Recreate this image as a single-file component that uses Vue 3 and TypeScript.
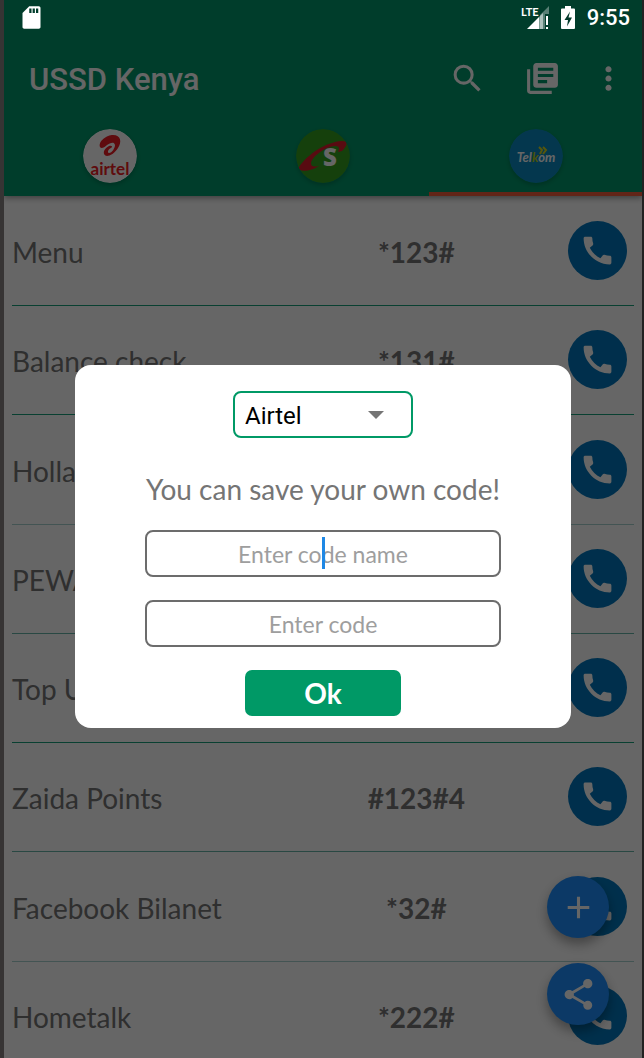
<script setup lang="ts">
import { ref } from 'vue'

interface UssdCode {
  name: string
  code: string
}

const codes: UssdCode[] = [
  { name: 'Menu', code: '*123#' },
  { name: 'Balance check', code: '*131#' },
  { name: 'Holla', code: '' },
  { name: 'PEWA', code: '' },
  { name: 'Top Up', code: '' },
  { name: 'Zaida Points', code: '#123#4' },
  { name: 'Facebook Bilanet', code: '*32#' },
  { name: 'Hometalk', code: '*222#' },
]

const network = ref('Airtel')
const codeName = ref('')
const codeValue = ref('')
</script>

<template>
  <div class="app">
    <div class="status">
      <svg class="sd" viewBox="0 0 24 24" aria-hidden="true">
        <path d="M18.500 2H10L4 8v12.500c0 .8.700 1.500 1.500 1.500h13c.8 0 1.500-.7 1.500-1.500v-17c0-.8-.7-1.500-1.500-1.500zM12 8h-2V4h2v4zm3 0h-2V4h2v4zm3 0h-2V4h2v4z" fill="#fff" />
      </svg>
      <svg class="signal" viewBox="0 0 30 26" aria-hidden="true">
        <text x="0" y="11" class="lte">LTE</text>
        <path d="M28 1v8h-4v15h-5V10z" fill="#fff" opacity=".35" />
        <path d="M6 24L18 12v12z" fill="#fff" />
        <path d="M18 12l4-4v16h-4z" fill="#fff" opacity=".5" />
        <path d="M25 11h2v9h-2zM25 22h2v2h-2z" fill="#fff" />
      </svg>
      <svg class="battery" viewBox="0 0 14 24" aria-hidden="true">
        <path d="M4 0h6v2.500h3a1 1 0 0 1 1 1V22a1 1 0 0 1-1 1H1a1 1 0 0 1-1-1V3.500a1 1 0 0 1 1-1h3z" fill="#fff" />
        <path d="M9 5.500L3.500 14H7l-1 6.500L11 11.500H7.500z" fill="#033a2b" />
      </svg>
      <span>9:55</span>
    </div>

    <header class="header">
      <div class="toolbar">
        <h1>USSD Kenya</h1>
        <button class="tool" aria-label="Search">
          <svg viewBox="0 0 24 24"><path d="M15.500 14h-.79l-.28-.27A6.471 6.471 0 0 0 16 9.500 6.500 6.500 0 1 0 9.500 16c1.610 0 3.090-.59 4.230-1.570l.27.28v.79l5 4.990L20.490 19l-4.990-5zm-6 0C7.010 14 5 11.990 5 9.500S7.010 5 9.500 5 14 7.010 14 9.500 11.990 14 9.500 14z" /></svg>
        </button>
        <button class="tool" aria-label="Saved codes">
          <svg viewBox="0 0 24 24"><path d="M4 6H2v14c0 1.100.9 2 2 2h14v-2H4V6zm16-4H8c-1.100 0-2 .9-2 2v12c0 1.100.9 2 2 2h12c1.100 0 2-.9 2-2V4c0-1.100-.9-2-2-2zm-1 9H9V9h10v2zm-4 4H9v-2h6v2zm4-8H9V5h10v2z" /></svg>
        </button>
        <button class="tool more" aria-label="More options">
          <svg viewBox="0 0 24 24"><path d="M12 8c1.100 0 2-.9 2-2s-.9-2-2-2-2 .9-2 2 .9 2 2 2zm0 2c-1.100 0-2 .9-2 2s.9 2 2 2 2-.9 2-2-.9-2-2-2zm0 6c-1.100 0-2 .9-2 2s.9 2 2 2 2-.9 2-2-.9-2-2-2z" /></svg>
        </button>
      </div>
      <nav class="tabs">
        <button class="tab" aria-label="Airtel">
          <svg class="logo" viewBox="0 0 54 54">
            <circle cx="27" cy="27" r="27" fill="#fff" />
            <path d="M17 18C15 12 24 6 30 6c8 0 9 7 5 13-3 5-8 8-11 8-5-1-4-7 2-10 3-1 4 1 2 2-3 1-4 5-2 5 3 0 6-5 6-8-1-4-5-2-8 0-3 3-6 4-7 2z" fill="#ed1c24" />
            <text x="27" y="46" class="airtel">airtel</text>
          </svg>
        </button>
        <button class="tab" aria-label="Safaricom">
          <svg class="logo" viewBox="0 0 54 54">
            <circle cx="27" cy="27" r="27" fill="#35a020" />
            <path d="M3 38C12 25 30 13 46 12c7 0 5 5 0 10l-4 1c2-4 1-6-3-6C28 18 16 28 15 34c0 4 3 4 8 3-6 4-15 6-19 4-2-1-2-2-1-3z" fill="#dd1c2b" />
            <text x="34" y="37" class="s">S</text>
          </svg>
        </button>
        <button class="tab active" aria-label="Telkom">
          <svg class="logo" viewBox="0 0 54 54">
            <circle cx="27" cy="27" r="27" fill="#0a8bc4" />
            <text x="27" y="33" class="telkom">Tel<tspan fill="#b5cc18">k</tspan>om</text>
            <path d="M30 18l3 3-2 4M34 18l3 3-3 4" fill="none" stroke="#d8d820" stroke-width="2" />
          </svg>
        </button>
      </nav>
    </header>

    <main class="list">
      <div v-for="item in codes" :key="item.name" class="row">
        <span class="name">{{ item.name }}</span>
        <span class="code">{{ item.code }}</span>
        <button class="call" :aria-label="`Call ${item.name}`">
          <svg viewBox="0 0 24 24"><path d="M20.010 15.380c-1.230 0-2.420-.2-3.530-.56a.977.977 0 0 0-1.010.24l-1.570 1.970c-2.830-1.350-5.480-3.900-6.890-6.830l1.950-1.660c.27-.28.35-.67.24-1.020-.37-1.110-.56-2.300-.56-3.530 0-.54-.45-.99-.99-.99H4.190C3.650 3 3 3.240 3 3.990 3 13.280 10.730 21 20.010 21c.71 0 .99-.63.99-1.180v-3.450c0-.54-.45-.99-.99-.99z" /></svg>
        </button>
      </div>
    </main>

    <div class="fabs">
      <button class="fab" aria-label="Add code">
        <svg viewBox="0 0 24 24"><path d="M19 13h-6v6h-2v-6H5v-2h6V5h2v6h6v2z" /></svg>
      </button>
      <button class="fab" aria-label="Share">
        <svg viewBox="0 0 24 24"><path d="M18 16.080c-.76 0-1.440.3-1.960.77L8.910 12.700c.05-.23.09-.46.09-.7s-.04-.47-.09-.7l7.050-4.110c.54.5 1.250.81 2.040.81 1.660 0 3-1.340 3-3s-1.340-3-3-3-3 1.340-3 3c0 .24.040.47.090.7L8.040 9.810C7.500 9.310 6.790 9 6 9c-1.660 0-3 1.340-3 3s1.340 3 3 3c.79 0 1.500-.31 2.040-.81l7.120 4.160c-.05.21-.08.43-.08.65 0 1.610 1.310 2.920 2.920 2.920s2.920-1.310 2.920-2.920-1.310-2.920-2.920-2.920z" /></svg>
      </button>
    </div>

    <div class="scrim">
      <form class="dialog" role="dialog" aria-label="Save your own code" @submit.prevent>
        <div class="picker">
          <select v-model="network" aria-label="Network">
            <option>Airtel</option>
            <option>Safaricom</option>
            <option>Telkom</option>
          </select>
          <svg class="arrow" viewBox="0 0 16 8" aria-hidden="true"><path d="M0 0h16L8 8z" fill="#757575" /></svg>
        </div>
        <p>You can save your own code!</p>
        <div class="field">
          <input v-model="codeName" type="text" placeholder="Enter code name" aria-label="Code name" />
          <span v-if="!codeName" class="caret"></span>
        </div>
        <div class="field">
          <input v-model="codeValue" type="text" placeholder="Enter code" aria-label="Code" />
        </div>
        <button class="ok" type="submit">Ok</button>
      </form>
    </div>
  </div>
</template>

<style>
body {
  margin: 0;
  background: #666;
}
</style>

<style scoped>
* {
  box-sizing: border-box;
}

button {
  border: 0;
  padding: 0;
  background: none;
  font: inherit;
  cursor: pointer;
}

.app {
  position: relative;
  display: flex;
  flex-direction: column;
  height: 100vh;
  overflow: hidden;
  border-left: 4px solid #363434;
  border-right: 2px solid #222;
  background: #fff;
  font-family: Lato, "Open Sans", sans-serif;
}

.status {
  position: absolute;
  z-index: 3;
  top: 0;
  left: 0;
  right: 0;
  display: flex;
  align-items: center;
  height: 35px;
  padding: 0 12px 0 14px;
  color: #fff;
  font: 500 22px/35px Roboto, sans-serif;
}

.sd {
  width: 27px;
  height: 27px;
  margin-right: auto;
}

.signal {
  width: 30px;
  height: 26px;
  margin-right: 10px;
}

.lte {
  font: 700 11px Lato, sans-serif;
  fill: #fff;
}

.battery {
  width: 14px;
  height: 24px;
  margin-right: 12px;
}

.header {
  position: relative;
  z-index: 1;
  flex: none;
  padding-top: 35px;
  background: #00996b;
  box-shadow: 0 2px 6px rgba(0, 0, 0, 0.4);
}

.toolbar {
  display: flex;
  align-items: center;
  height: 86px;
  padding: 0 6px 0 25px;
}

h1 {
  flex: 1;
  margin: 0;
  padding-top: 4px;
  color: #fff;
  font: 500 31px/40px Roboto, sans-serif;
}

.tool {
  display: grid;
  place-items: center;
  width: 75px;
  height: 56px;
}

.more {
  width: 56px;
}

.tool svg,
.call svg,
.fab svg {
  width: 37px;
  height: 37px;
  fill: #fff;
}

.tabs {
  display: flex;
}

.tab {
  display: flex;
  flex: 1;
  justify-content: center;
  height: 75px;
  padding-top: 8px;
  border-bottom: 4px solid transparent;
}

.tab.active {
  border-bottom-color: #f45c3c;
}

.logo {
  width: 54px;
  height: 54px;
  border-radius: 50%;
  box-shadow: 0 2px 4px rgba(0, 0, 0, 0.2);
}

.airtel {
  font: 700 17px Lato, sans-serif;
  fill: #ed1c24;
  text-anchor: middle;
}

.s {
  font: 800 24px "Open Sans", sans-serif;
  fill: #fff;
  text-anchor: middle;
}

.telkom {
  font: italic 700 13px Lato, sans-serif;
  fill: #fff;
  text-anchor: middle;
}

.list {
  flex: 1;
  min-height: 0;
  padding: 1px 8px 0;
  overflow: hidden;
}

.row {
  display: grid;
  grid-template-columns: 5fr 6fr 59px;
  align-items: center;
  height: 109px;
  padding: 0 7px 1px 0;
  border-bottom: 1px solid #17a17a;
  color: #757575;
  font-size: 28px;
  line-height: 34px;
}

.row:nth-child(4n + 3) {
  height: 110px;
  border-bottom-color: #a9d2d0;
}

.row:nth-child(4),
.row:nth-child(6) {
  border-bottom-color: #68b5a8;
}

.name,
.code {
  padding-top: 3px;
}

.name {
  white-space: nowrap;
}

.code {
  font-weight: 700;
  text-align: center;
}

.call {
  display: grid;
  place-items: center;
  width: 59px;
  height: 59px;
  border-radius: 50%;
  background: #0277bd;
}

.fabs {
  position: absolute;
  z-index: 1;
  right: 33px;
  bottom: 33px;
  display: grid;
  gap: 25px;
}

.fab {
  display: grid;
  place-items: center;
  width: 62px;
  height: 62px;
  border-radius: 50%;
  background: #1e90ff;
  box-shadow: 0 6px 12px rgba(0, 0, 0, 0.35);
}

.scrim {
  position: absolute;
  z-index: 2;
  inset: 0;
  display: flex;
  align-items: center;
  justify-content: center;
  padding: 35px 71px 0;
  background: rgba(0, 0, 0, 0.6);
}

.dialog {
  display: flex;
  flex: 1;
  flex-direction: column;
  align-items: center;
  padding: 26px 70px 12px;
  border-radius: 16px;
  background: #fff;
}

.picker {
  position: relative;
  width: 180px;
}

select {
  display: block;
  width: 100%;
  height: 47px;
  padding: 3px 10px 0;
  border: 2px solid #009966;
  border-radius: 8px;
  appearance: none;
  background: #fff;
  color: #000;
  font: 24px Roboto, sans-serif;
}

.arrow {
  position: absolute;
  top: 20px;
  right: 29px;
  width: 16px;
  height: 8px;
  pointer-events: none;
}

p {
  margin: 34px 0 24px;
  color: #757575;
  font-size: 28px;
  line-height: 34px;
  white-space: nowrap;
}

.field {
  position: relative;
  width: 100%;
  margin-bottom: 23px;
}

input {
  display: block;
  width: 100%;
  height: 47px;
  padding: 1px 12px 0;
  border: 2px solid #6c6c6c;
  border-radius: 8px;
  outline: 0;
  background: #fff;
  color: #444;
  font: 23px Lato, sans-serif;
  text-align: center;
}

input::placeholder {
  color: #9e9e9e;
  opacity: 1;
}

.caret {
  position: absolute;
  top: 7px;
  left: calc(50% - 1px);
  width: 3px;
  height: 32px;
  background: #1e88e5;
}

.ok {
  width: 156px;
  height: 46px;
  border-radius: 7px;
  background: #009966;
  color: #fff;
  font-size: 28px;
  font-weight: 700;
}
</style>
